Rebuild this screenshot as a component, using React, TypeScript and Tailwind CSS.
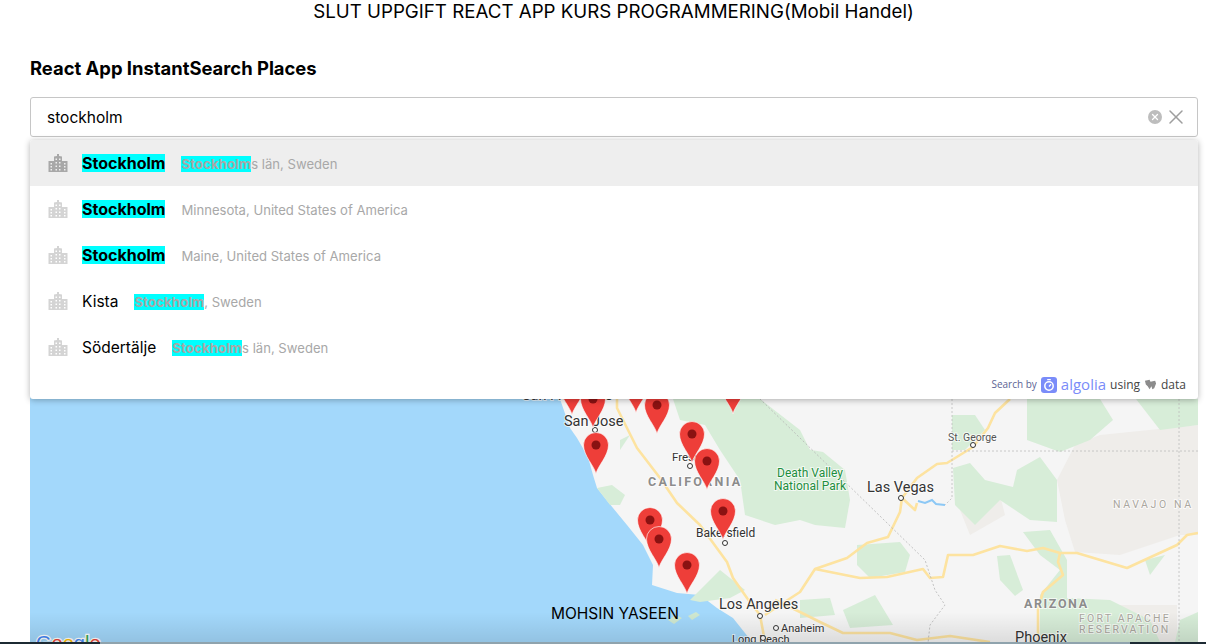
import { X } from 'lucide-react';

type Suggestion = {
  name: string;
  nameHit?: boolean;
  hit: string;
  rest: string;
  active?: boolean;
};

const suggestions: Suggestion[] = [
  { name: 'Stockholm', nameHit: true, hit: 'Stockholm', rest: 's län, Sweden', active: true },
  { name: 'Stockholm', nameHit: true, hit: '', rest: 'Minnesota, United States of America' },
  { name: 'Stockholm', nameHit: true, hit: '', rest: 'Maine, United States of America' },
  { name: 'Kista', hit: 'Stockholm', rest: ', Sweden' },
  { name: 'Södertälje', hit: 'Stockholm', rest: 's län, Sweden' },
];

// head centre of every marker, tip sits 29px under it
const pins = [
  [572, 386],
  [636, 384],
  [733, 385],
  [593, 399],
  [657, 405],
  [596, 445],
  [692, 434],
  [707, 461],
  [723, 511],
  [650, 520],
  [659, 539],
  [687, 565],
];

const greens = [
  'M952 415 L975 415 L985 430 L965 450 L952 450Z',
  'M1027 399 L1100 399 L1113 420 L1090 440 L1060 452 L1027 440Z',
  'M1136 399 L1198 399 L1198 425 L1160 430Z',
  'M953 468 L970 463 L985 480 L1013 487 L1017 470 L1040 457 L1057 480 L1057 522 L1030 520 L1000 500 L975 525 L955 505Z',
  'M800 448 L823 452 L845 470 L850 500 L845 528 L815 525 L800 520Z',
  'M673 399 L760 399 L800 430 L820 470 L800 520 L775 525 L745 515 L740 480 L720 450 L705 425 L680 420Z',
  'M857 545 L900 542 L910 555 L905 572 L870 578 L857 565Z',
  'M1023 532 L1050 530 L1067 560 L1067 598 L1110 600 L1150 620 L1160 642 L1040 642 L1040 595 L1060 570 L1040 555Z',
  'M997 556 L1010 555 L1023 590 L1015 596 L1000 580Z',
  'M800 600 L830 598 L835 615 L800 618Z',
  'M843 610 L875 595 L893 625 L850 628Z',
  'M1180 620 L1198 612 L1198 642 L1175 642Z',
  'M597 488 L612 485 L625 495 L620 505 L610 505Z',
  'M690 600 L720 570 L745 590 L730 598 L700 602Z',
  'M620 440 L630 435 L620 450Z',
  'M1145 560 L1165 555 L1150 575Z',
];

const beiges = [
  'M1057 480 L1075 445 L1100 435 L1198 425 L1198 535 L1180 535 L1120 555 L1075 552 L1065 520Z',
  'M960 510 L1000 495 L1005 515 L970 535Z',
  'M1100 605 L1177 605 L1177 642 L1120 642Z',
];

const highways = [
  'M1010 399 L995 413 L988 428 L973 447 L947 463 L937 464 L917 478 L902 498 L900 512 L888 537 L867 543 L847 558 L815 569 L800 592 L780 605 L765 615',
  'M815 569 L860 578 L887 577 L923 569 L930 578 L943 577 L948 555 L973 555 L1000 546 L1027 551 L1043 548 L1060 553 L1077 553 L1127 568 L1177 545 L1187 535 L1198 533',
  'M1060 553 L1058 562 L1063 575 L1043 592 L1038 608 L1038 642',
  'M775 600 L800 612 L820 622 L843 633 L890 633 L917 640 L950 636 L990 642',
  'M617 399 L617 408 L627 428 L637 448 L660 478 L677 503 L700 525 L727 562 L733 578 L747 598 L760 615 L765 642',
  'M902 498 L915 510 L917 503',
];

const BuildingIcon = ({ active }: { active?: boolean }) => (
  <svg viewBox="0 0 20 20" className={`w-5 h-5 ${active ? 'text-[#a8a8a8]' : 'text-[#d4d4d4]'}`}>
    <path
      fill="currentColor"
      fillRule="evenodd"
      d="M0.5 8H6V3.5L9 3V1h2v2l3 .5V8h5.5v11H.5zM2.5 10v1.5h1.5V10zM2.5 13v1.5h1.5V13zM2.5 16v1.5h1.5V16zM7.5 5.5V7H9V5.5zM11 5.5V7h1.5V5.5zM7.5 9v1.5H9V9zM11 9v1.5h1.5V9zM7.5 12.5V14H9v-1.5zM11 12.5V14h1.5v-1.5zM7.5 16v1.5H9V16zM11 16v1.5h1.5V16zM16 10v1.5h1.5V10zM16 13v1.5h1.5V13zM16 16v1.5h1.5V16z"
    />
  </svg>
);

const Pin = ({ x, y }: { x: number; y: number }) => (
  <g transform={`translate(${x} ${y})`}>
    <path
      d="M0 29C-1.5 21-12.5 11-12.5 0A12.5 12.5 0 0 1 12.5 0C12.5 11 1.5 21 0 29Z"
      fill="#ee3e39"
      stroke="#fff"
      strokeOpacity="0.8"
      strokeWidth="0.8"
    />
    <circle r="4.5" fill="#8a1212" />
  </g>
);

const MapLabel = ({ x, y, size, children, color = '#333', weight = 400, spacing = 0 }: {
  x: number;
  y: number;
  size: number;
  children: string;
  color?: string;
  weight?: number;
  spacing?: number;
}) => (
  <text
    x={x}
    y={y}
    fontSize={size}
    fill={color}
    fontWeight={weight}
    letterSpacing={spacing}
    stroke="#fff"
    strokeWidth="2"
    strokeOpacity="0.7"
    paintOrder="stroke"
    fontFamily="Roboto, sans-serif"
  >
    {children}
  </text>
);

const MapDrawing = () => (
  <svg viewBox="30 150 1168 492" className="absolute inset-0 w-full h-full">
    <rect x="30" y="150" width="1168" height="492" fill="#a3d8fb" />
    <path
      d="M560 399 L570 428 L577 438 L588 457 L593 475 L597 488 L613 508 L627 525 L643 545 L653 565 L652 585 L677 593 L700 595 L717 608 L733 618 L753 643 L1198 643 L1198 150 L560 150Z"
      fill="#f5f5f5"
    />
    {beiges.map((d) => (
      <path key={d} d={d} fill="#efedea" />
    ))}
    {greens.map((d) => (
      <path key={d} d={d} fill="#d7edd8" />
    ))}
    <path d="M668 620 L676 615 L682 618 L674 624Z M688 616 L696 612 L700 615 L692 620Z" fill="#cfe8d0" />
    {highways.map((d) => (
      <path key={d} d={d} fill="none" stroke="#fde3a0" strokeWidth="2.6" strokeLinejoin="round" />
    ))}
    <path d="M952 399 L952 498 L945 505 M952 451 L1198 451 M1179 399 L1179 643" fill="none" stroke="#bdbdbd" strokeWidth="0.8" strokeDasharray="2 2" />
    <path d="M757 396 L925 560 L935 590 L945 605 L930 625 L928 643" fill="none" stroke="#b5b5b5" strokeWidth="0.8" strokeDasharray="2 2" />
    <path d="M918 501 L925 503 L932 500 L936 504 L945 505" fill="none" stroke="#8cc8f5" strokeWidth="2" />
    <MapLabel x={564} y={426} size={14.5}>San Jose</MapLabel>
    <MapLabel x={522} y={400} size={14.5}>San Francisco</MapLabel>
    <MapLabel x={672} y={461} size={11.5}>Fresno</MapLabel>
    <MapLabel x={648} y={486} size={12.5} weight={700} color="#8c8c8c" spacing={2.3}>CALIFORNIA</MapLabel>
    <MapLabel x={696} y={537} size={12}>Bakersfield</MapLabel>
    <MapLabel x={719} y={609} size={14.5}>Los Angeles</MapLabel>
    <MapLabel x={781} y={632} size={11}>Anaheim</MapLabel>
    <MapLabel x={732} y={643} size={11}>Long Beach</MapLabel>
    <MapLabel x={777} y={477} size={12} color="#1e8e3e">Death Valley</MapLabel>
    <MapLabel x={774} y={490} size={12} color="#1e8e3e">National Park</MapLabel>
    <MapLabel x={867} y={492} size={14.5}>Las Vegas</MapLabel>
    <MapLabel x={948} y={441} size={10.5} color="#555">St. George</MapLabel>
    <MapLabel x={1113} y={508} size={10.5} color="#aaa79f" spacing={2.6}>NAVAJO NA</MapLabel>
    <MapLabel x={1024} y={608} size={12.5} weight={700} color="#8c8c8c" spacing={1.6}>ARIZONA</MapLabel>
    <MapLabel x={1079} y={622} size={10.5} color="#aaa79f" spacing={2.2}>FORT APACHE</MapLabel>
    <MapLabel x={1079} y={633} size={10.5} color="#aaa79f" spacing={2.2}>RESERVATION</MapLabel>
    <MapLabel x={1015} y={642} size={14.5}>Phoenix</MapLabel>
    {[
      [595, 430],
      [690, 466],
      [725, 543],
      [760, 616],
      [776, 628],
      [763, 638],
      [901, 498],
      [973, 445],
    ].map(([x, y]) => (
      <circle key={`${x}-${y}`} cx={x} cy={y} r="2.5" fill="#fff" stroke="#333" strokeWidth="1" />
    ))}
    {pins.map(([x, y]) => (
      <Pin key={`${x}-${y}`} x={x} y={y} />
    ))}
    <text x={36} y={650} fontSize={20} fontFamily="'Liberation Sans', sans-serif" stroke="#fff" strokeWidth="2.5" paintOrder="stroke">
      <tspan fill="#4285f4">G</tspan>
      <tspan fill="#ea4335">o</tspan>
      <tspan fill="#fbbc05">o</tspan>
      <tspan fill="#4285f4">g</tspan>
      <tspan fill="#34a853">l</tspan>
      <tspan fill="#ea4335">e</tspan>
    </text>
  </svg>
);

export default function App() {
  return (
    <div className="h-[644px] overflow-hidden bg-white text-black font-['Inter',sans-serif]">
      <h1 className="pt-px pl-[21px] text-center text-[18.72px] leading-[22px]">
        SLUT UPPGIFT REACT APP KURS PROGRAMMERING(Mobil Handel)
      </h1>
      <div className="pl-[30px] pr-2">
        <h2 className="mt-[34px] text-[18.4px] leading-[22px] font-bold">React App InstantSearch Places</h2>
        <div className="mt-[18px] h-10 border border-[#c6c6c6] rounded-[3px] pl-4 pr-[9px] flex items-center bg-white">
          <span className="flex-1 pt-px text-[15.5px]">stockholm</span>
          <span className="w-[14px] h-[14px] rounded-full bg-[#bdbdbd] flex items-center justify-center mr-[2px]">
            <X size={10} strokeWidth={3} color="#fff" />
          </span>
          <X size={24} strokeWidth={1.5} color="#9e9e9e" />
        </div>
        <div className="relative">
          <div className="relative mt-[13px] h-[492px] overflow-hidden">
            <MapDrawing />
            <div className="absolute inset-x-0 bottom-0 h-[30px] bg-gradient-to-b from-transparent to-black/10" />
            <p className="absolute left-[521px] top-[454px] text-[15.5px] leading-5">MOHSIN YASEEN</p>
          </div>
          <div className="absolute inset-x-0 -top-[10px] bg-white rounded-[3px] shadow-[0_1px_6px_rgba(0,0,0,0.3)] overflow-hidden">
            {suggestions.map((s, i) => (
              <div key={i} className={`h-[46px] flex items-center pl-[18px] ${s.active ? 'bg-[#eeeeee]' : ''}`}>
                <BuildingIcon active={s.active} />
                <span className={`ml-[14px] leading-[18px] ${s.nameHit ? 'text-base font-bold bg-[#00ffff]' : 'text-[15.5px] mt-px'}`}>{s.name}</span>
                <span className="ml-4 mt-0.5 text-[13.1px] leading-4 text-[#a8a8a8]">
                  {s.hit && <span className="bg-[#00ffff] font-bold text-[13.4px]">{s.hit}</span>}
                  {s.rest}
                </span>
              </div>
            ))}
            <div className="h-[29px] flex items-center justify-end pr-3 font-['Open_Sans',sans-serif]">
              <span className="text-[10px] text-[#5d6494] mr-[4px]">Search by</span>
              <span className="w-[16px] h-[16px] rounded-[3px] bg-[#7a8cf9] flex items-center justify-center mr-[4px]">
                <svg viewBox="0 0 16 16" className="w-4 h-4">
                  <circle cx="8" cy="9" r="4.2" fill="none" stroke="#fff" strokeWidth="1.5" />
                  <path d="M8 9.5 L10 7.2 M6.2 2.6h3.6" stroke="#fff" strokeWidth="1.3" fill="none" />
                </svg>
              </span>
              <span className="text-[15px] leading-none font-medium text-[#7a8cf9] mr-[4px]">algolia</span>
              <span className="text-[12px] text-[#444]">using</span>
              <svg viewBox="0 0 14 14" className="w-[13px] h-[13px] mx-[4px]">
                <path d="M1 3l5-1 1 2 5-1 1 3-2 5-2 1-1-3-2 3-2-3-2-2z" fill="#8c8c8c" />
              </svg>
              <span className="text-[12px] text-[#444]">data</span>
            </div>
          </div>
        </div>
      </div>
      <div className="flex h-[2px]">
        <div className="w-[100px] bg-[#1c2a33]" />
        <div className="flex-1 bg-[#8fa3ad]" />
        <div className="w-[76px] bg-[#1c2a33]" />
      </div>
    </div>
  );
}
